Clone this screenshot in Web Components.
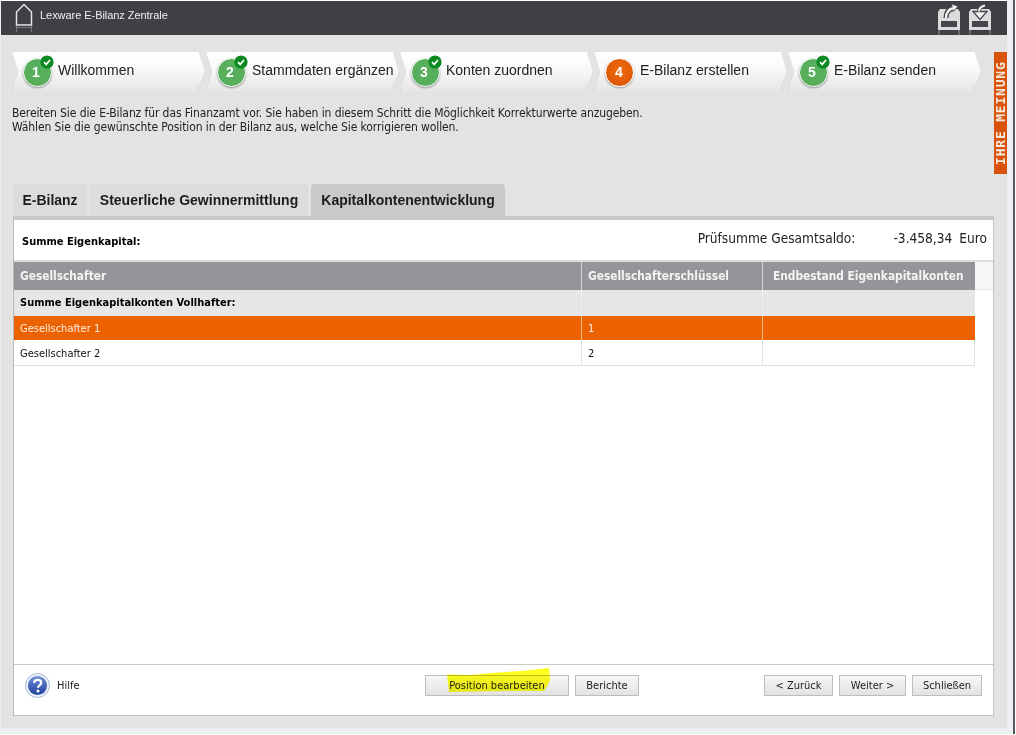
<!DOCTYPE html>
<html lang="de">
<head>
<meta charset="utf-8">
<title>Lexware E-Bilanz Zentrale</title>
<style>
  html,body{margin:0;padding:0;background:#fff;}
  body{font-family:"DejaVu Sans Condensed","DejaVu Sans",sans-serif;overflow:hidden;}
</style>
</head>
<body>
<app-shell>
  <top-bar slot="top"></top-bar>
  <step-nav slot="steps"></step-nav>
  <div slot="intro">Bereiten Sie die E-Bilanz für das Finanzamt vor. Sie haben in diesem Schritt die Möglichkeit Korrekturwerte anzugeben.<br>Wählen Sie die gewünschte Position in der Bilanz aus, welche Sie korrigieren wollen.</div>
  <tab-bar slot="tabs"></tab-bar>
  <main-panel slot="panel"></main-panel>
  <feedback-tab slot="side"></feedback-tab>
</app-shell>

<script>
const UI_FONT = '"Liberation Sans",Arial,sans-serif'
const BODY_FONT = '"DejaVu Sans Condensed","DejaVu Sans",sans-serif'

class AppShell extends HTMLElement{
  constructor(){
    super()
    this.attachShadow({mode:'open'})
  }
  connectedCallback(){
    this.shadowRoot.innerHTML = `
      <style>
        :host{display:block;width:1016px;height:735px;background:#fff;overflow:hidden;}
        .frame{width:1013px;height:734px;border-right:2px solid #55565a;background:#edeff2;}
        .window{margin-left:1px;width:1006px;height:728px;background:#e3e3e3;display:flex;flex-direction:column;}
        .top-wrap{padding-top:1px;background:#fff;}
        .body{display:flex;flex:1;}
        .content{width:982px;padding-left:11px;display:flex;flex-direction:column;}
        .steps{padding-top:17px;}
        .intro{font:12px/14px ${BODY_FONT};letter-spacing:-.1px;color:#222;padding-top:14px;height:78px;}
        .side{padding-top:17px;}
      </style>
      <div class="frame">
        <div class="window">
          <div class="top-wrap"><slot name="top"></slot></div>
          <div class="body">
            <div class="content">
              <div class="steps"><slot name="steps"></slot></div>
              <div class="intro"><slot name="intro"></slot></div>
              <slot name="tabs"></slot>
              <slot name="panel"></slot>
            </div>
            <div class="side"><slot name="side"></slot></div>
          </div>
        </div>
      </div>`
  }
}

class TopBar extends HTMLElement{
  constructor(){
    super()
    this.attachShadow({mode:'open'})
  }
  connectedCallback(){
    this.shadowRoot.innerHTML = `
      <style>
        :host{display:block;height:34px;background:#3f4045;color:#f0f0f0;}
        .bar{height:34px;display:flex;align-items:center;padding:0 16px 0 14px;}
        .title{font:11px/14px ${UI_FONT};margin-left:7px;margin-top:-7px;letter-spacing:-.05px;}
        .tools{margin-left:auto;display:flex;gap:9px;}
        svg{display:block;}
      </style>
      <div class="bar">
        <svg width="18" height="32" viewBox="0 0 18 32" style="margin-top:-2px">
          <path d="M1.500 11 9 3.500 16.500 11V24H1.500Z" fill="none" stroke="#e4e4e4" stroke-width="1.500"/>
          <path d="M1.500 25v6M16.500 25v6M1.500 26.500h15" stroke="#77787b" stroke-width="1.200" fill="none"/>
        </svg>
        <span class="title">Lexware E-Bilanz Zentrale</span>
        <div class="tools">
          <svg width="22" height="33" viewBox="0 0 22 33">
            <path d="M2 7H20L22 10V28H0V10Z" fill="#dcdcdc"/>
            <rect x="3" y="19" width="16" height="6" fill="#45464b"/>
            <path d="M1 28v5M21 28v5" stroke="#77787b" stroke-width="1.500"/>
            <path d="M8 16c0-6 3-9 8-10" fill="none" stroke="#45464b" stroke-width="5"/>
            <path d="M12.500 1 21 4l-6 6Z" fill="#45464b"/>
            <path d="M8 16c0-6 3-9 8-10" fill="none" stroke="#f0f0f0" stroke-width="2.400"/>
            <path d="M14 2.500 19.500 4.500 15.500 8.500Z" fill="#f0f0f0"/>
          </svg>
          <svg width="22" height="33" viewBox="0 0 22 33">
            <path d="M2 7H20L22 10V28H0V10Z" fill="#dcdcdc"/>
            <rect x="3" y="19" width="16" height="6" fill="#45464b"/>
            <path d="M1 28v5M21 28v5" stroke="#77787b" stroke-width="1.500"/>
            <path d="M4 9.500h14l-7 8Z" fill="#f2f2f2" stroke="#45464b" stroke-width="1.300"/>
            <path d="M10 9c0-3 2-5 6-6" fill="none" stroke="#45464b" stroke-width="4"/>
            <path d="M10 9.500c0-3 2-5 6-6" fill="none" stroke="#f2f2f2" stroke-width="2"/>
          </svg>
        </div>
      </div>`
  }
}

class StepItem extends HTMLElement{
  constructor(){
    super()
    this.attachShadow({mode:'open'})
  }
  connectedCallback(){
    const active = this.hasAttribute('active')
    const check = active ? '' : `<svg class="check" width="14" height="14" viewBox="0 0 14 14"><circle cx="7" cy="7" r="6.600" fill="#0a8a20"/><path d="M4 7.200 6.200 9.400 10 5" fill="none" stroke="#fff" stroke-width="1.700"/></svg>`
    this.shadowRoot.innerHTML = `
      <style>
        :host{display:block;width:194px;height:40px;filter:drop-shadow(0 0 .7px #a8a8a8);}
        .shape{height:39px;width:193px;display:flex;align-items:center;box-sizing:border-box;padding-left:11px;
          background:linear-gradient(#fff 0,#fafafa 40%,#e6e6e6 100%);
          clip-path:polygon(0 0,187px 0,193px 19.500px,186px 100%,0 100%,6px 19.500px);position:relative;}
        .num{width:27px;height:27px;border:1.500px solid #fff;border-radius:50%;background:${active?'radial-gradient(circle at 50% 40%,#ee6a0c,#d75205)':'#57ae5b'};
          color:#fff;font:bold 14px/27px ${UI_FONT};text-align:center;flex:none;box-shadow:0 1px 2px #999;position:relative;margin-top:1px;${active?'text-indent:-1px;':'text-indent:-3px;'}}
        .check{position:absolute;left:28px;top:3px;}
        .label{font:14px/18px ${UI_FONT};color:#222;margin-left:6px;margin-top:-4px;white-space:nowrap;}
      </style>
      <div class="shape">
        <span class="num">${this.dataset.n}</span>${check}
        <span class="label"><slot></slot></span>
      </div>`
  }
}

class StepNav extends HTMLElement{
  constructor(){
    super()
    this.attachShadow({mode:'open'})
  }
  connectedCallback(){
    const steps = ['Willkommen','Stammdaten ergänzen','Konten zuordnen','E-Bilanz erstellen','E-Bilanz senden']
    this.shadowRoot.innerHTML = `
      <style>:host{display:flex;height:40px;}</style>
      ${steps.map((s,i) => `<step-item data-n="${i+1}" ${i===3?'active':''}>${s}</step-item>`).join('')}`
  }
}

class TabBar extends HTMLElement{
  constructor(){
    super()
    this.attachShadow({mode:'open'})
  }
  connectedCallback(){
    const tabs = [['E-Bilanz',74],['Steuerliche Gewinnermittlung',218],['Kapitalkontenentwicklung',194]]
    this.shadowRoot.innerHTML = `
      <style>
        :host{display:flex;gap:3px;height:32px;margin-left:1px;}
        .tab{height:32px;border-radius:4px 4px 0 0;background:#dcdcdc;font:bold 14px/32px ${UI_FONT};color:#1c1c1c;text-align:center;}
        .tab.on{background:#c9c9c9;}
      </style>
      ${tabs.map((t,i) => `<div class="tab ${i===2?'on':''}" style="width:${t[1]}px">${t[0]}</div>`).join('')}`
  }
}

class MainPanel extends HTMLElement{
  constructor(){
    super()
    this.attachShadow({mode:'open'})
  }
  connectedCallback(){
    this.shadowRoot.innerHTML = `
      <style>
        :host{display:flex;flex-direction:column;width:981px;height:500px;margin-left:1px;box-sizing:border-box;background:#fff;
          border-top:4px solid #c9c9c9;border-left:1px solid #b9b9b9;border-right:1px solid #c4c4c4;border-bottom:1px solid #c4c4c4;}
        .sum{height:40px;display:flex;align-items:flex-start;font:12px/14px ${BODY_FONT};color:#222;flex:none;border-bottom:2px solid #dcdcdc;}
        .sum b{font-size:11px;color:#000;margin:15px 0 0 8px;}
        .check{margin-left:auto;display:flex;font-size:13.600px;line-height:16px;margin-top:10px;}
        .check .v{margin-left:38px;}
        .check .e{margin:0 6px 0 7px;}
        .grow{flex:1;}
      </style>
      <div class="sum">
        <b>Summe Eigenkapital:</b>
        <div class="check"><span>Prüfsumme Gesamtsaldo:</span><span class="v">-3.458,34</span><span class="e">Euro</span></div>
      </div>
      <data-table></data-table>
      <div class="grow"></div>
      <panel-footer></panel-footer>`
  }
}

class DataTable extends HTMLElement{
  constructor(){
    super()
    this.attachShadow({mode:'open'})
  }
  connectedCallback(){
    const cols = '568px 181px 212px'
    this.shadowRoot.innerHTML = `
      <style>
        :host{display:block;font:11px/14px ${BODY_FONT};color:#111;}
        .row{display:grid;grid-template-columns:${cols} 1fr;}
        .row > div{padding-left:6px;box-sizing:border-box;border-right:1px solid #e2e2e2;}
        .row > div:last-child{border:0;padding:0;}
        .head > div{height:28px;background:#939598;color:#f4f4f4;font-weight:bold;font-size:11.800px;line-height:28px;border-right:1px solid #d8d8d8;}
        .head > div:nth-child(3){border:0;padding-left:10px;}
        .head > div:last-child{background:#f7f7f7;border-bottom:1px solid #e6e6e6;}
        .group > div:not(:last-child){height:26px;background:#e6e6e6;font-weight:bold;line-height:26px;color:#000;border-right:1px solid #eee;}
        .sel > div:not(:last-child){height:24px;background:#ec6100;color:#fbeee0;line-height:25px;border-right:1px solid #f5b98c;}
        .plain > div:not(:last-child){height:26px;line-height:27px;border-bottom:1px solid #dedede;}
        .sel > div:nth-child(3),.group > div:nth-child(3){border-right:0;}
      </style>
      <div class="row head"><div>Gesellschafter</div><div>Gesellschafterschlüssel</div><div>Endbestand Eigenkapitalkonten</div><div></div></div>
      <div class="row group"><div>Summe Eigenkapitalkonten Vollhafter:</div><div></div><div></div><div></div></div>
      <div class="row sel"><div>Gesellschafter 1</div><div>1</div><div></div><div></div></div>
      <div class="row plain"><div>Gesellschafter 2</div><div>2</div><div></div><div></div></div>`
  }
}

class UiButton extends HTMLElement{
  constructor(){
    super()
    this.attachShadow({mode:'open'})
  }
  connectedCallback(){
    this.shadowRoot.innerHTML = `
      <style>
        :host{display:block;width:${this.dataset.w}px;height:21px;box-sizing:border-box;border:1px solid #bdbdbd;
          background:linear-gradient(#f7f7f7,#e2e2e2);font:11px/20px ${BODY_FONT};color:#222;text-align:center;}
      </style>
      <slot></slot>`
  }
}

class PanelFooter extends HTMLElement{
  constructor(){
    super()
    this.attachShadow({mode:'open'})
  }
  connectedCallback(){
    this.shadowRoot.innerHTML = `
      <style>
        :host{display:flex;flex:none;height:51px;box-sizing:border-box;border-top:1px solid #c8c8c8;align-items:flex-start;padding-top:10px;position:relative;font:11px/14px ${BODY_FONT};color:#222;}
        .help{display:flex;align-items:center;gap:7px;margin:-2px 0 0 11px;width:400px;height:25px;}
        .mid{display:flex;gap:6px;}
        .nav{display:flex;gap:6px;margin-left:auto;margin-right:11px;}
        .mark{position:absolute;left:433px;top:3px;mix-blend-mode:multiply;pointer-events:none;}
      </style>
      <div class="help">
        <svg width="25" height="25" viewBox="0 0 25 25">
          <defs><linearGradient id="q" x1="0" y1="0" x2="0" y2="1"><stop offset="0" stop-color="#6f8fd6"/><stop offset="1" stop-color="#1f3f9e"/></linearGradient></defs>
          <circle cx="12.500" cy="12.500" r="12" fill="#eef2fa" stroke="#a9b7d8"/>
          <circle cx="12.500" cy="12.500" r="9.600" fill="url(#q)"/>
          <path d="M9 9.800c.2-2 1.700-3 3.600-3 2.100 0 3.600 1.200 3.600 3 0 2.500-3.200 2.600-3.200 5" fill="none" stroke="#fff" stroke-width="2.200"/>
          <circle cx="13" cy="18" r="1.500" fill="#fff"/>
        </svg>
        <span>Hilfe</span>
      </div>
      <div class="mid">
        <ui-button data-w="144">Position bearbeiten</ui-button>
        <ui-button data-w="64">Berichte</ui-button>
      </div>
      <div class="nav">
        <ui-button data-w="69">&lt; Zurück</ui-button>
        <ui-button data-w="67">Weiter &gt;</ui-button>
        <ui-button data-w="70">Schließen</ui-button>
      </div>
      <svg class="mark" width="104" height="26" viewBox="0 0 104 26">
        <path d="M0 7 1 6.500 24 7 44 5 74 3 102 0 103 12 101 17 97 23 60 23 2 24Z" fill="#ffff20"/>
      </svg>`
  }
}

class FeedbackTab extends HTMLElement{
  constructor(){
    super()
    this.attachShadow({mode:'open'})
  }
  connectedCallback(){
    this.shadowRoot.innerHTML = `
      <style>
        :host{display:block;width:13px;height:122px;background:#d9540a;}
        div{writing-mode:vertical-rl;transform:rotate(180deg);height:122px;width:13px;text-align:center;
          font:bold 13px/13px "DejaVu Sans Mono",monospace;letter-spacing:.8px;color:#f6e8dc;white-space:nowrap;}
      </style>
      <div>IHRE MEINUNG</div>`
  }
}

customElements.define('app-shell', AppShell)
customElements.define('top-bar', TopBar)
customElements.define('step-item', StepItem)
customElements.define('step-nav', StepNav)
customElements.define('tab-bar', TabBar)
customElements.define('main-panel', MainPanel)
customElements.define('data-table', DataTable)
customElements.define('ui-button', UiButton)
customElements.define('panel-footer', PanelFooter)
customElements.define('feedback-tab', FeedbackTab)
</script>
</body>
</html>
